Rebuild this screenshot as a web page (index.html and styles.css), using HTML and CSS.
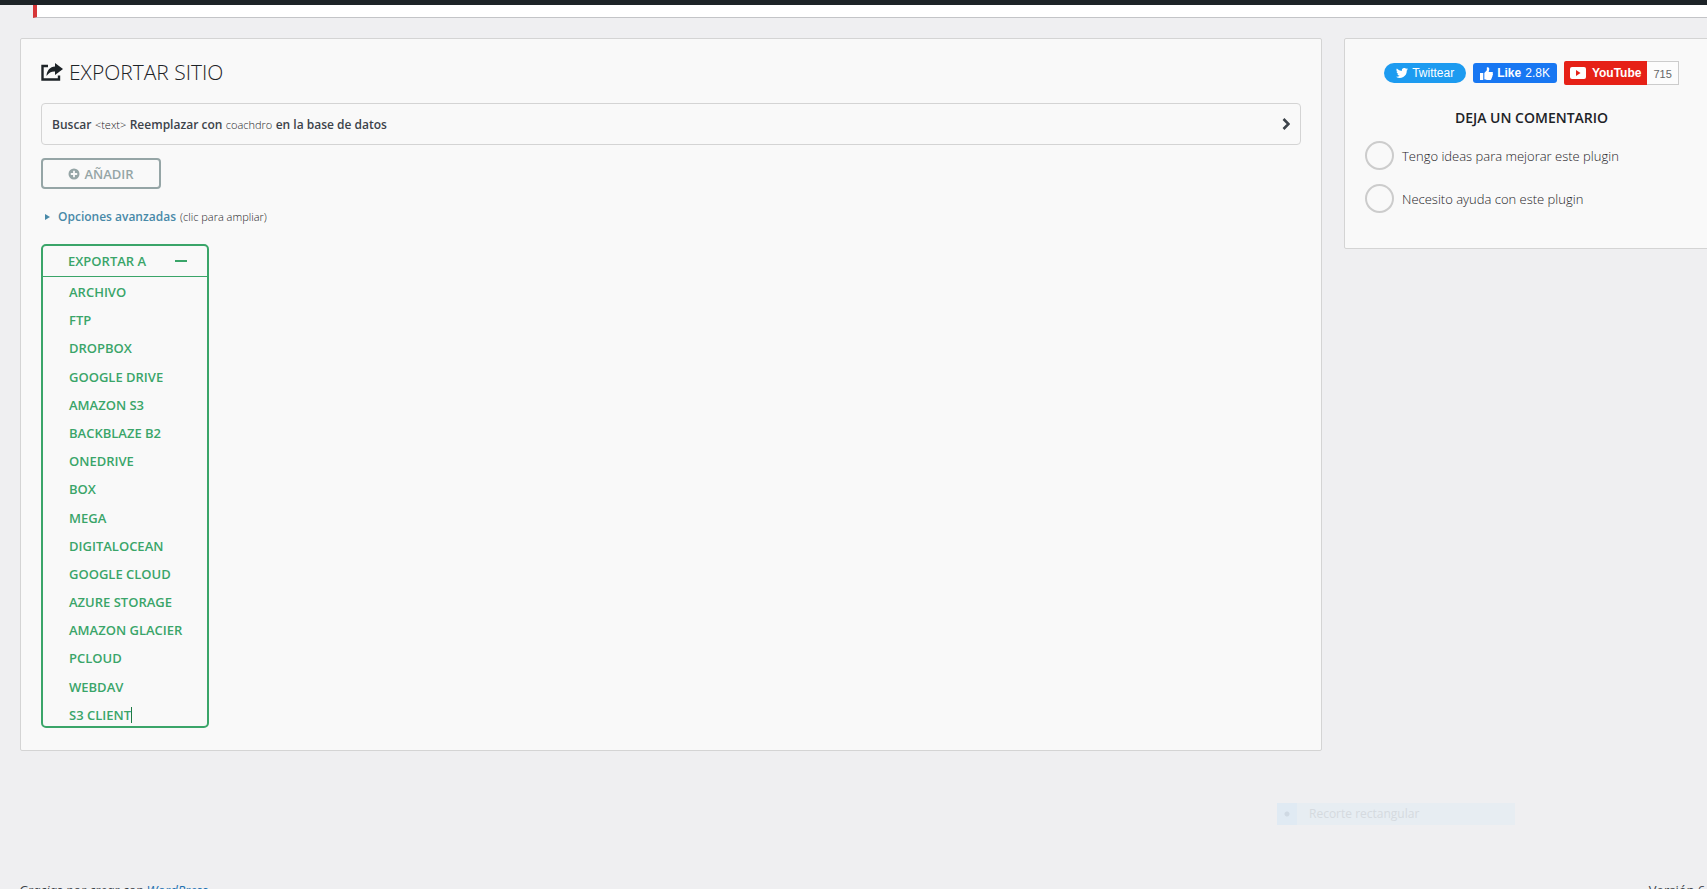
FILE: index.html
```html
<!DOCTYPE html>
<html lang="es">
<head>
    <meta charset="UTF-8">
    <meta name="viewport" content="width=device-width, initial-scale=1.0">
    <title>Exportar sitio</title>
    <link rel="stylesheet" href="styles.css">
</head>
<body>
    <div class="admin-bar"></div>
    <div class="notice"></div>

    <div class="container">
        <main class="panel export">
            <h1>
                <svg class="icon-share" viewBox="0 0 22 18" aria-hidden="true">
                    <path d="M7 3H1.500V16.500H18V12.500" fill="none" stroke="currentColor" stroke-width="2.400"/>
                    <path d="M14 0l8 6-8 6V8.500C10.500 8.300 8 9.500 5.500 13 5.800 7.500 9 3.700 14 3.500z" fill="currentColor"/>
                </svg>
                Exportar sitio
            </h1>

            <button type="button" class="replace">
                <span><b>Buscar</b> <small>&lt;text&gt;</small> <b>Reemplazar con</b> <small>coachdro</small> <b>en la base de datos</b></span>
                <svg class="icon-chevron" viewBox="0 0 8 12" aria-hidden="true"><path d="M1.500 1l5 5-5 5" fill="none" stroke="currentColor" stroke-width="2.600"/></svg>
            </button>

            <button type="button" class="add">
                <svg class="icon-plus" viewBox="0 0 12 12" aria-hidden="true"><circle cx="6" cy="6" r="5.500" fill="currentColor"/><path d="M6 2.800v6.400M2.800 6h6.400" stroke="#f9f9f9" stroke-width="1.800"/></svg>
                Añadir
            </button>

            <div class="advanced">
                <svg class="icon-arrow" viewBox="0 0 5 6" aria-hidden="true"><path d="M0 0l5 3-5 3z" fill="currentColor"/></svg>
                <a href="#">Opciones avanzadas</a>
                <small>(clic para ampliar)</small>
            </div>

            <div class="export-to">
                <button type="button" class="export-toggle">Exportar a <span class="minus"></span></button>
                <ul>
                    <li><a href="#">Archivo</a></li>
                    <li><a href="#">FTP</a></li>
                    <li><a href="#">Dropbox</a></li>
                    <li><a href="#">Google Drive</a></li>
                    <li><a href="#">Amazon S3</a></li>
                    <li><a href="#">Backblaze B2</a></li>
                    <li><a href="#">OneDrive</a></li>
                    <li><a href="#">Box</a></li>
                    <li><a href="#">Mega</a></li>
                    <li><a href="#">DigitalOcean</a></li>
                    <li><a href="#">Google Cloud</a></li>
                    <li><a href="#">Azure Storage</a></li>
                    <li><a href="#">Amazon Glacier</a></li>
                    <li><a href="#">pCloud</a></li>
                    <li><a href="#">WebDAV</a></li>
                    <li><a href="#" class="caret">S3 Client</a></li>
                </ul>
            </div>
        </main>

        <aside class="panel sidebar">
            <div class="share">
                <a href="#" class="twitter">
                    <svg class="icon-bird" viewBox="0 0 24 20" aria-hidden="true"><path d="M24 2.400a10 10 0 0 1-2.800.8A5 5 0 0 0 23.300.5a10 10 0 0 1-3.100 1.200 4.900 4.900 0 0 0-8.400 4.500A14 14 0 0 1 1.700 1a4.900 4.900 0 0 0 1.500 6.600 5 5 0 0 1-2.200-.6 4.900 4.900 0 0 0 3.900 4.900 5 5 0 0 1-2.200.1 4.900 4.900 0 0 0 4.600 3.400A10 10 0 0 1 0 17.500 14 14 0 0 0 21.500 5a10 10 0 0 0 2.500-2.600z" fill="currentColor"/></svg>
                    Twittear
                </a>
                <a href="#" class="facebook">
                    <svg class="icon-thumb" viewBox="0 0 12 12" aria-hidden="true"><path d="M0 5.500h3V12H0zM4 5.500L6.300 3V.5C7.800-.3 8.800.8 8.500 2.500L8 4.500h3c1 0 1.200 1 .7 1.600.5.600.3 1.300-.2 1.600.3.700.1 1.300-.5 1.600.2.700-.1 1.300-.6 1.500.1.700-.3 1.200-1.200 1.200H6.500C5.300 12 4.700 11.600 4 11.400z" fill="currentColor"/></svg>
                    <strong>Like</strong> 2.8K
                </a>
                <div class="youtube">
                    <a href="#">
                        <svg class="icon-play" viewBox="0 0 16 12" aria-hidden="true"><rect width="16" height="12" rx="2" fill="#fff"/><path d="M6 3l4.500 3L6 9z" fill="#e62117"/></svg>
                        YouTube
                    </a>
                    <span>715</span>
                </div>
            </div>

            <h2>Deja un comentario</h2>
            <label><input type="radio" name="feedback"> Tengo ideas para mejorar este plugin</label>
            <label><input type="radio" name="feedback"> Necesito ayuda con este plugin</label>
        </aside>
    </div>

    <div class="snip"><i></i><span>Recorte rectangular</span></div>

    <footer>
        <em>Gracias por crear con <a href="#">WordPress</a>.</em>
        <span>Versión 6.0.2</span>
    </footer>
</body>
</html>
```
FILE: styles.css
```css
* { box-sizing: border-box; }
body { margin: 0; height: 100vh; overflow: hidden; background: #efeff1; color: #3c434a; font: 13px/20px "Open Sans", "Noto Sans", sans-serif; }
a { color: inherit; text-decoration: none; }
button { background: none; color: inherit; font: inherit; cursor: pointer; }

.admin-bar { height: 5px; background: #1d2327; }
.notice { height: 13px; margin-left: 33px; background: #fff; border-left: 4px solid #d63638; border-bottom: 1px solid #c3c4c7; }

.container { display: flex; align-items: flex-start; gap: 22px; margin: 20px -12px 0 20px; }
.panel { background: #f9f9f9; border: 1px solid #d4d4d4; border-radius: 2px; padding: 20px; }
.export { flex: 1; padding-bottom: 22px; }
.sidebar { width: 375px; padding-bottom: 21px; }

h1 { display: flex; align-items: center; gap: 6px; margin: 0 0 18px; font-size: 21px; line-height: 26px; font-weight: 300; text-transform: uppercase; color: #1d2327; }
.icon-share { width: 22px; height: 18px; }
.replace { display: flex; align-items: center; justify-content: space-between; width: 100%; height: 42px; padding: 0 10px; border: 1px solid #d4d4d4; border-radius: 4px; text-align: left; }
.replace b { font-weight: 600; font-size: 12px; }
small { font-size: 11px; font-weight: 300; color: #1d2327; }
.icon-chevron { width: 8px; height: 12px; }

.add { display: flex; align-items: center; justify-content: center; gap: 4px; width: 120px; height: 31px; margin: 13px 0 18px; border: 2px solid #95a5a6; border-radius: 4px; color: #95a5a6; font-weight: 600; text-transform: uppercase; }
.icon-plus { width: 12px; height: 12px; }

.advanced { display: flex; align-items: center; gap: 4px; height: 20px; margin-bottom: 17px; padding-left: 4px; }
.advanced a { color: #4889a8; font-weight: 600; font-size: 12px; }
.icon-arrow { width: 5px; height: 6px; margin-right: 4px; color: #4889a8; }

.export-to { width: 168px; border: 2px solid #3aa569; border-radius: 5px; color: #3aa569; font-weight: 600; text-transform: uppercase; }
.export-toggle { display: flex; align-items: center; justify-content: space-between; width: 100%; height: 31px; padding: 0 20px 0 25px; border: 0; border-bottom: 1px solid #3aa569; text-transform: inherit; }
.minus { width: 12px; height: 2px; background: #3aa569; }
.export-to ul { display: flex; flex-direction: column; justify-content: space-between; height: 449px; margin: 0; padding: 4px 0 0 26px; list-style: none; line-height: 22px; }
.caret { display: inline-block; border-right: 1px solid #1d7a44; line-height: 16px; }

.share { display: flex; align-items: center; justify-content: center; gap: 7px; height: 28px; font: 12px/20px "Liberation Sans", Arial, sans-serif; color: #fff; }
.share a { display: flex; align-items: center; }
.twitter { gap: 4px; height: 20px; padding: 0 12px; background: #1d9bf0; border-radius: 10px; font-weight: 500; }
.icon-bird { width: 12px; height: 10px; }
.facebook { gap: 4px; height: 20px; padding: 0 7px; background: #1877f2; border-radius: 3px; }
.icon-thumb { width: 13px; height: 13px; }
.youtube { display: flex; height: 24px; }
.youtube a { gap: 6px; padding: 0 6px; background: #e62117; border-radius: 2px 0 0 2px; font-weight: bold; }
.youtube span { padding: 2px 6px 0; border: 1px solid #ccc; border-left: 0; background: #fcfcfc; color: #666; font-size: 11px; }
.icon-play { width: 16px; height: 12px; }

h2 { margin: 21px 0 13px; font-size: 14px; line-height: 20px; font-weight: 600; text-align: center; text-transform: uppercase; color: #1d2327; }
label { display: flex; align-items: center; gap: 8px; margin-bottom: 14px; font-weight: 300; color: #1d2327; }
input[type="radio"] { appearance: none; width: 29px; height: 29px; margin: 0; border: 2px solid #ccc; border-radius: 50%; }

/* fading menu entry over the page */
.snip { position: absolute; left: 1277px; top: 803px; display: flex; align-items: center; width: 238px; height: 22px; background: #e7edf2; color: #d5dadf; font-size: 12px; }
.snip i { width: 20px; height: 22px; margin-right: 12px; background: radial-gradient(circle at center, #cfd9e3 2px, #e0eaf3 3px); }

footer { display: flex; justify-content: space-between; margin: 129px -20px 0 19px; }
footer a { color: #2271b1; }
```
